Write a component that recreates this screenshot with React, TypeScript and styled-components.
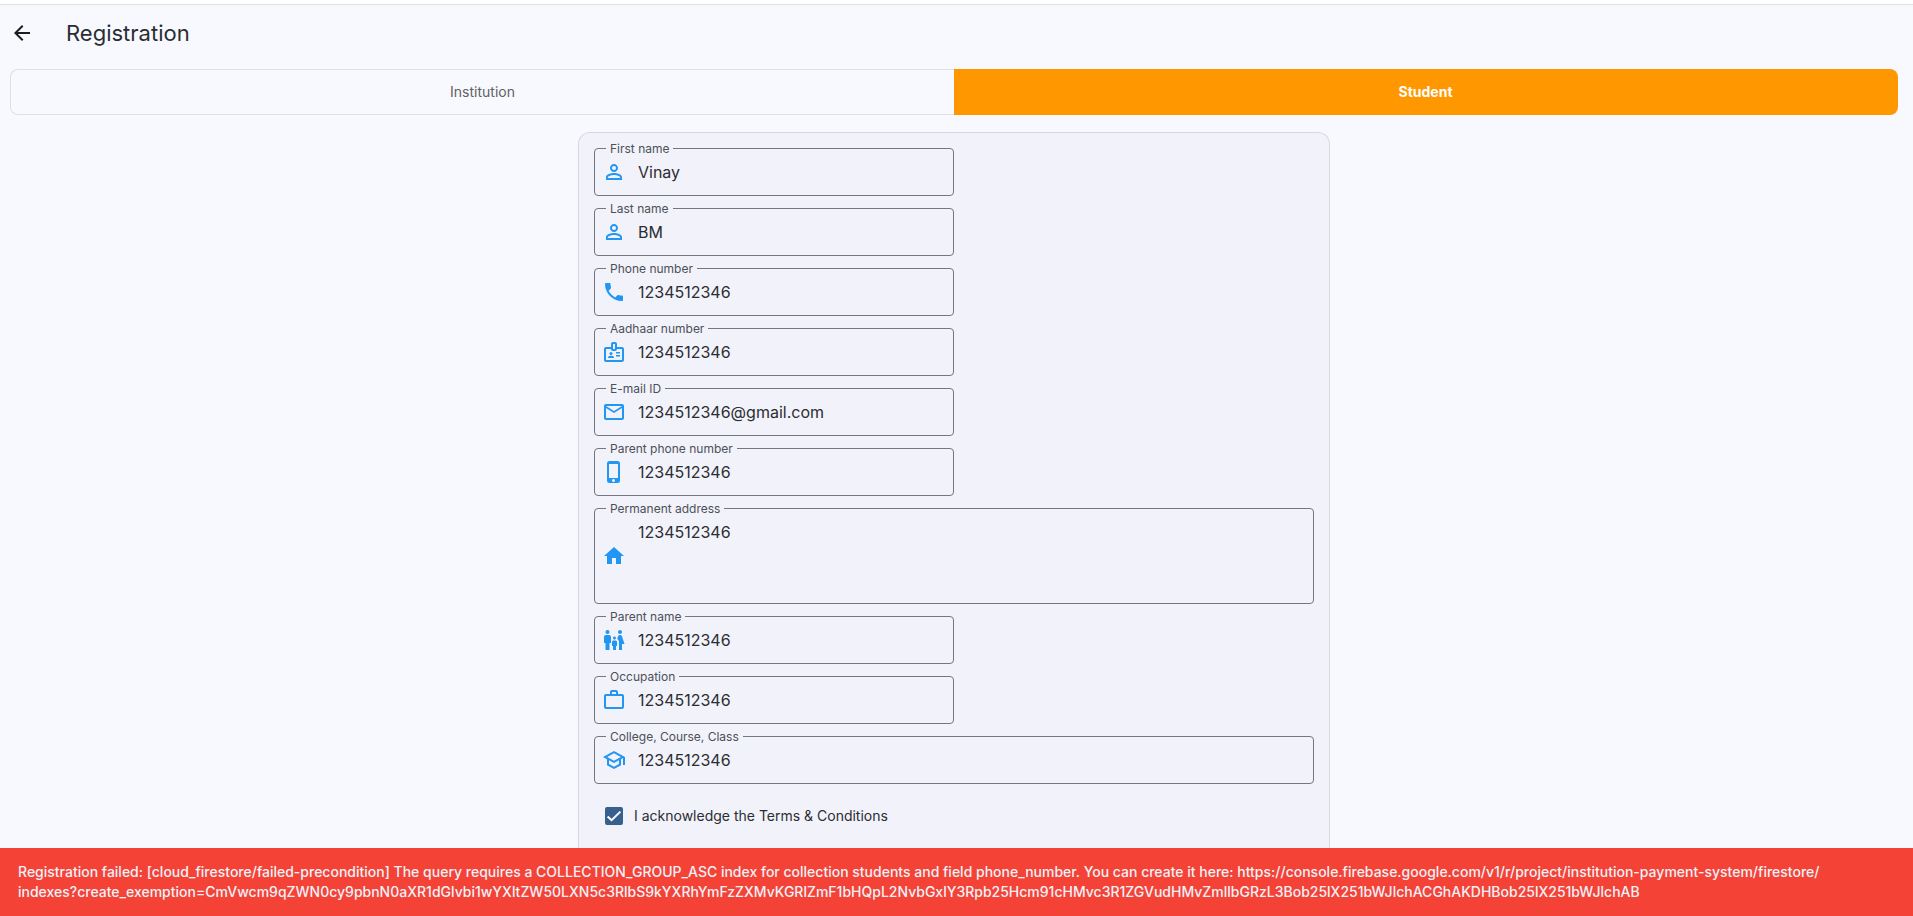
import React, { useState } from "react";
import styled, { createGlobalStyle } from "styled-components";
import type { IconType } from "react-icons";
import {
  MdArrowBack,
  MdFamilyRestroom,
  MdHome,
  MdOutlineBadge,
  MdMailOutline,
  MdOutlineSchool,
  MdPersonOutline,
  MdPhone,
  MdPhoneIphone,
  MdWorkOutline,
} from "react-icons/md";

const colors = {
  page: "#f8f9ff",
  card: "#f2f2fb",
  line: "#e0e0e0",
  cardLine: "#d8d8de",
  outline: "#73777f",
  ink: "#191c20",
  text: "#2a2d31",
  label: "#4c5057",
  blue: "#2196f3",
  orange: "#ff9800",
  red: "#f44336",
  check: "#36618e",
};

const GlobalStyle = createGlobalStyle`
  *, *::before, *::after { box-sizing: border-box; }
  body {
    margin: 0;
    background: ${colors.page};
    color: ${colors.ink};
    font-family: Inter, "Liberation Sans", sans-serif;
    font-optical-sizing: none;
  }
  button, input, textarea {
    font: inherit;
    font-optical-sizing: none;
    color: inherit;
  }
`;

const Page = styled.div`
  display: flex;
  flex-direction: column;
  min-height: 100vh;
  border-top: 4px solid #fff;
`;

const AppBar = styled.header`
  display: flex;
  align-items: center;
  gap: 32px;
  height: 57px;
  padding: 0 10px;
  border-top: 1px solid ${colors.line};
`;

const BackButton = styled.button`
  display: flex;
  padding: 0;
  border: 0;
  background: none;
  cursor: pointer;
`;

const Title = styled.h1`
  margin: 0;
  color: ${colors.text};
  font-size: 22px;
  line-height: 28px;
  font-weight: 400;
`;

const Tabs = styled.div`
  display: flex;
  margin: 8px 15px 0 10px;
`;

const Tab = styled.button<{ $active: boolean }>`
  flex: 1;
  height: 46px;
  padding: 0 0 2px;
  border: 1px solid ${(p) => (p.$active ? colors.orange : colors.line)};
  background: ${(p) => (p.$active ? colors.orange : "transparent")};
  color: ${(p) => (p.$active ? "#fff" : "#616161")};
  font-size: 14px;
  font-weight: ${(p) => (p.$active ? 700 : 400)};
  cursor: pointer;

  &:first-child {
    border-radius: 8px 0 0 8px;
    border-right: 0;
  }
  &:last-child {
    border-radius: 0 8px 8px 0;
    border-left: 0;
  }
`;

const Main = styled.main`
  flex: 1;
  display: flex;
  justify-content: center;
  padding: 17px 15px 0 10px;
`;

const Card = styled.form`
  display: flex;
  flex-direction: column;
  gap: 12px;
  width: 100%;
  max-width: 752px;
  padding: 15px 15px 12px;
  border: 1px solid ${colors.cardLine};
  border-bottom: 0;
  border-radius: 12px 12px 0 0;
  background: ${colors.card};
  color: ${colors.text};
`;

const FieldBox = styled.div<{ $wide: boolean }>`
  position: relative;
  display: flex;
  align-items: center;
  gap: 12px;
  width: ${(p) => (p.$wide ? "100%" : "50%")};
  padding: 11px 11px 11px 7px;
  border: 1px solid ${colors.outline};
  border-radius: 4px;
`;

const FieldLabel = styled.label`
  position: absolute;
  top: -8px;
  left: 11px;
  padding: 0 4px;
  background: ${colors.card};
  color: ${colors.label};
  font-size: 12px;
  line-height: 16px;
`;

const FieldIcon = styled.span`
  display: flex;
  color: ${colors.blue};
`;

const TextInput = styled.input`
  flex: 1;
  min-width: 0;
  height: 24px;
  padding: 0;
  border: 0;
  outline: 0;
  background: none;
  font-size: 16px;
  line-height: 24px;
`;

const TextArea = styled.textarea`
  flex: 1;
  min-width: 0;
  padding: 0;
  border: 0;
  outline: 0;
  resize: none;
  overflow: hidden;
  background: none;
  font-size: 16px;
  line-height: 24px;
`;

const Terms = styled.label`
  display: flex;
  align-items: center;
  gap: 11px;
  height: 40px;
  padding-left: 11px;
  font-size: 14px;
  line-height: 20px;
`;

const Checkbox = styled.input`
  appearance: none;
  width: 18px;
  height: 18px;
  margin: 0;
  border: 2px solid ${colors.check};
  border-radius: 2px;

  &:checked {
    background: ${colors.check};
  }
`;

const CheckSlot = styled.span`
  position: relative;
  display: flex;
`;

const CheckMark = styled.svg`
  position: absolute;
  inset: 0;
  pointer-events: none;
`;

const SnackBar = styled.div`
  padding: 14px 18px;
  background: ${colors.red};
  color: #f0f0f7;
  font-size: 14px;
  line-height: 20px;
  font-weight: 500;
  overflow-wrap: anywhere;
`;

const SnackLine = styled.span`
  display: block;
`;

interface FieldSpec {
  id: string;
  label: string;
  value: string;
  icon: IconType;
  type?: string;
  wide?: boolean;
  rows?: number;
}

const fields: FieldSpec[] = [
  { id: "first-name", label: "First name", value: "Vinay", icon: MdPersonOutline },
  { id: "last-name", label: "Last name", value: "BM", icon: MdPersonOutline },
  { id: "phone", label: "Phone number", value: "1234512346", icon: MdPhone, type: "tel" },
  { id: "aadhaar", label: "Aadhaar number", value: "1234512346", icon: MdOutlineBadge },
  { id: "email", label: "E-mail ID", value: "1234512346@gmail.com", icon: MdMailOutline, type: "email" },
  { id: "parent-phone", label: "Parent phone number", value: "1234512346", icon: MdPhoneIphone, type: "tel" },
  { id: "address", label: "Permanent address", value: "1234512346", icon: MdHome, wide: true, rows: 3 },
  { id: "parent-name", label: "Parent name", value: "1234512346", icon: MdFamilyRestroom },
  { id: "occupation", label: "Occupation", value: "1234512346", icon: MdWorkOutline },
  { id: "college", label: "College, Course, Class", value: "1234512346", icon: MdOutlineSchool, wide: true },
];

function Field({ id, label, value, icon: Icon, type = "text", wide = false, rows }: FieldSpec) {
  return (
    <FieldBox $wide={wide}>
      <FieldLabel htmlFor={id}>{label}</FieldLabel>
      <FieldIcon>
        <Icon size={24} />
      </FieldIcon>
      {rows ? (
        <TextArea id={id} rows={rows} defaultValue={value} />
      ) : (
        <TextInput id={id} type={type} defaultValue={value} />
      )}
    </FieldBox>
  );
}

export default function App() {
  const [tab, setTab] = useState("Student");
  const [accepted, setAccepted] = useState(true);

  return (
    <>
      <GlobalStyle />
      <Page>
        <AppBar>
          <BackButton type="button" aria-label="Back">
            <MdArrowBack size={24} />
          </BackButton>
          <Title>Registration</Title>
        </AppBar>
        <Tabs role="tablist">
          {["Institution", "Student"].map((name) => (
            <Tab
              key={name}
              type="button"
              role="tab"
              aria-selected={tab === name}
              $active={tab === name}
              onClick={() => setTab(name)}
            >
              {name}
            </Tab>
          ))}
        </Tabs>
        <Main>
          <Card>
            {fields.map((field) => (
              <Field key={field.id} {...field} />
            ))}
            <Terms>
              <CheckSlot>
                <Checkbox
                  type="checkbox"
                  checked={accepted}
                  onChange={(e) => setAccepted(e.target.checked)}
                />
                {accepted && (
                  <CheckMark width="18" height="18" viewBox="0 0 18 18">
                    <path d="M2.6 9.4 6.6 13.2 15.4 4.6" fill="none" stroke="#fff" strokeWidth="2" />
                  </CheckMark>
                )}
              </CheckSlot>
              I acknowledge the Terms &amp; Conditions
            </Terms>
          </Card>
        </Main>
        <SnackBar role="alert">
          <SnackLine>
            Registration failed: [cloud_firestore/failed-precondition] The query requires a
            COLLECTION_GROUP_ASC index for collection students and field phone_number. You can
            create it here:{" "}
            https://console.firebase.google.com/v1/r/project/institution-payment-system/firestore/
          </SnackLine>
          <SnackLine>
            indexes?create_exemption=CmVwcm9qZWN0cy9pbnN0aXR1dGlvbi1wYXltZW50LXN5c3RlbS9kYXRhYmFzZXMvKGRlZmF1bHQpL2NvbGxlY3Rpb25Hcm91cHMvc3R1ZGVudHMvZmllbGRzL3Bob25lX251bWJlchACGhAKDHBob25lX251bWJlchAB
          </SnackLine>
        </SnackBar>
      </Page>
    </>
  );
}
